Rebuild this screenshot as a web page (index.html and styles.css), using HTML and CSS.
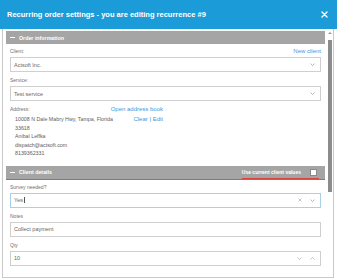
FILE: index.html
```html
<!DOCTYPE html>
<html lang="en">
<head>
    <meta charset="UTF-8">
    <title>Recurring order settings</title>
    <link rel="stylesheet" href="styles.css">
</head>
<body>

    <div class="dialog">
        <!-- Header -->
        <div class="dialog-header">
            <span class="dialog-title">Recurring order settings - you are editing recurrence #9</span>
            <svg class="close" width="7" height="7" viewBox="0 0 7 7">
                <path d="M1 1 L6 6 M6 1 L1 6" stroke="#fff" stroke-width="1.4" stroke-linecap="round"/>
            </svg>
        </div>

        <div class="dialog-body">
            <div class="content">

                <!-- Order information -->
                <div class="section">
                    <div class="section-bar"><span class="minus"></span>Order information</div>
                    <div class="section-body">
                        <div class="field">
                            <div class="label-row">
                                <span class="label">Client:</span>
                                <a class="link">New client</a>
                            </div>
                            <div class="input">
                                <span class="value">Actsoft Inc.</span>
                                <svg class="chev" width="5" height="3" viewBox="0 0 5 3"><path d="M0.5 0.5 L2.5 2.5 L4.5 0.5" fill="none" stroke="#9a9a9a" stroke-width="0.7"/></svg>
                            </div>
                        </div>

                        <div class="field">
                            <div class="label-row">
                                <span class="label">Service:</span>
                            </div>
                            <div class="input">
                                <span class="value">Test service</span>
                                <svg class="chev" width="5" height="3" viewBox="0 0 5 3"><path d="M0.5 0.5 L2.5 2.5 L4.5 0.5" fill="none" stroke="#9a9a9a" stroke-width="0.7"/></svg>
                            </div>
                        </div>

                        <div class="field address">
                            <div class="label-row">
                                <span class="label">Address:</span>
                                <a class="link">Open address book</a>
                            </div>
                            <div class="address-row">
                                <div class="address-lines">
                                    <div>10008 N Dale Mabry Hwy, Tampa, Florida</div>
                                    <div>33618</div>
                                    <div>Anibal Leffka</div>
                                    <div>dispatch@actsoft.com</div>
                                    <div>8139362331</div>
                                </div>
                                <a class="link">Clear | Edit</a>
                            </div>
                        </div>
                    </div>
                </div>

                <!-- Client details -->
                <div class="section">
                    <div class="section-bar blue-line">
                        <span class="minus"></span>Client details
                        <span class="use-current">Use current client values <span class="checkbox"></span></span>
                    </div>
                    <div class="section-body">
                        <div class="field">
                            <div class="label-row">
                                <span class="label">Survey needed?</span>
                            </div>
                            <div class="input focused">
                                <span class="value">Yes<span class="caret"></span></span>
                                <svg class="clear" width="4" height="4" viewBox="0 0 4 4"><path d="M0.5 0.5 L3.5 3.5 M3.5 0.5 L0.5 3.5" stroke="#a0a0a0" stroke-width="0.6"/></svg>
                                <svg class="chev" width="5" height="3" viewBox="0 0 5 3"><path d="M0.5 0.5 L2.5 2.5 L4.5 0.5" fill="none" stroke="#9a9a9a" stroke-width="0.7"/></svg>
                            </div>
                        </div>

                        <div class="field">
                            <div class="label-row">
                                <span class="label">Notes</span>
                            </div>
                            <div class="input">
                                <span class="value">Collect payment</span>
                            </div>
                        </div>

                        <div class="field">
                            <div class="label-row">
                                <span class="label">Qty</span>
                            </div>
                            <div class="input">
                                <span class="value">10</span>
                                <svg class="clear" width="5" height="3" viewBox="0 0 5 3"><path d="M0.5 0.5 L2.5 2.5 L4.5 0.5" fill="none" stroke="#a0a0a0" stroke-width="0.6"/></svg>
                                <svg class="chev" width="5" height="3" viewBox="0 0 5 3"><path d="M0.5 2.5 L2.5 0.5 L4.5 2.5" fill="none" stroke="#a0a0a0" stroke-width="0.6"/></svg>
                            </div>
                        </div>
                    </div>
                </div>

            </div>

            <!-- Scrollbar -->
            <div class="scrollbar">
                <span class="arrow-up"></span>
                <span class="thumb"></span>
            </div>
        </div>
    </div>

</body>
</html>
```

FILE: styles.css
```css
body {
    margin: 0;
    padding: 0;
    background: #fff;
    font-family: 'Liberation Sans', Arial, sans-serif;
    color: #555;
}

.dialog {
    width: 337px;
    height: 280px;
}

/* Header biru */
.dialog-header {
    height: 29px;
    background-color: #1b9bd8;
    display: flex;
    align-items: center;
    justify-content: space-between;
    padding: 0 9px 0 7px;
}

.dialog-title {
    color: #fff;
    font-weight: bold;
    font-size: 7.5px;
}

.close {
    display: block;
}

/* Body dengan border */
.dialog-body {
    margin-left: 2px;
    width: 330px;
    height: 248px;
    border: 1px solid #c9c9c9;
    border-top: none;
    display: flex;
    overflow: hidden;
}

.content {
    flex: 1;
    padding: 2px 1px 0 3px;
    overflow: hidden;
}

/* Bar section abu-abu */
.section-bar {
    height: 13px;
    background-color: #a5a5a5;
    color: #fff;
    font-weight: bold;
    font-size: 5.3px;
    display: flex;
    align-items: center;
    padding-left: 4px;
}

.section-bar.blue-line {
    border-bottom: 1px solid #1b9bd8;
    padding-right: 6px;
}

.minus {
    width: 5px;
    height: 1px;
    background-color: #fff;
    margin-right: 4px;
}

.use-current {
    margin-left: auto;
    display: flex;
    align-items: center;
    font-size: 5px;
    height: 11px;
    margin-top: 1px;
    border-bottom: 1px solid #d9443f;
}

.checkbox {
    width: 5px;
    height: 5px;
    background-color: #fff;
    border: 1px solid #8a8a8a;
    margin-left: 9px;
    margin-right: 2px;
}

.section-body {
    padding: 3px 4px 8px 4px;
}

.field + .field {
    margin-top: 4px;
}

.label-row {
    height: 8px;
    margin-bottom: 2px;
    display: flex;
    align-items: center;
    justify-content: space-between;
}

.label {
    font-size: 5px;
    color: #707070;
}

.link {
    font-size: 6px;
    color: #3a9ae0;
    cursor: pointer;
}

/* Input */
.input {
    height: 13px;
    border: 1px solid #cfcfcf;
    display: flex;
    align-items: center;
    padding: 0 5px 0 3px;
    font-size: 5.5px;
    color: #666;
}

.input.focused {
    border-color: #a8d0e6;
}

.value {
    flex: 1;
    display: flex;
    align-items: center;
}

.caret {
    width: 0;
    height: 6px;
    border-left: 1px solid #555;
    margin-left: 1px;
}

.clear {
    margin-right: 8px;
}

/* Alamat */
.field.address {
    width: 153px;
}

.address .label-row {
    margin-top: 3px;
}

.address-row {
    margin-top: 2px;
    display: flex;
    justify-content: space-between;
    align-items: flex-start;
}

.address-lines {
    font-size: 5.3px;
    line-height: 8.6px;
    color: #606060;
    padding-left: 5px;
}

.address-row .link {
    line-height: 8.6px;
}

/* Scrollbar palsu */
.scrollbar {
    width: 7px;
    display: flex;
    flex-direction: column;
    align-items: center;
    padding-top: 3px;
}

.arrow-up {
    width: 0;
    height: 0;
    border-left: 2px solid transparent;
    border-right: 2px solid transparent;
    border-bottom: 2px solid #9a9a9a;
}

.thumb {
    width: 4px;
    height: 152px;
    margin-top: 6px;
    background-color: #8c8c8c;
}
```
